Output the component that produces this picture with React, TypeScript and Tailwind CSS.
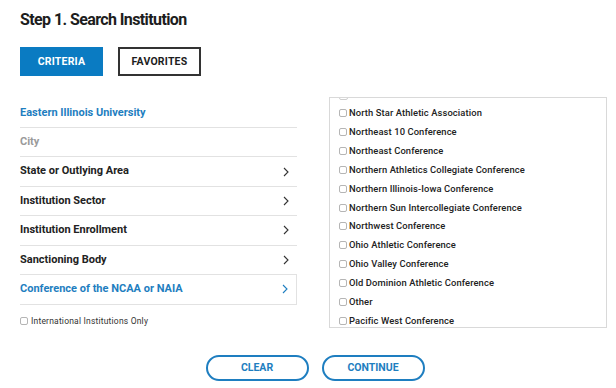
import React from "react";

const criteria = [
  { label: "Eastern Illinois University", tone: "blue", chevron: false },
  { label: "City", tone: "muted", chevron: false },
  { label: "State or Outlying Area", tone: "dark", chevron: true },
  { label: "Institution Sector", tone: "dark", chevron: true },
  { label: "Institution Enrollment", tone: "dark", chevron: true },
  { label: "Sanctioning Body", tone: "dark", chevron: true },
];

const conferences = [
  "North Star Athletic Association",
  "Northeast 10 Conference",
  "Northeast Conference",
  "Northern Athletics Collegiate Conference",
  "Northern Illinois-Iowa Conference",
  "Northern Sun Intercollegiate Conference",
  "Northwest Conference",
  "Ohio Athletic Conference",
  "Ohio Valley Conference",
  "Old Dominion Athletic Conference",
  "Other",
  "Pacific West Conference",
];

function Chevron({ color = "#333" }: { color?: string }) {
  return (
    <svg width="6" height="10" viewBox="0 0 6 10" className="mr-[8px]">
      <path d="M1 1l4 4-4 4" fill="none" stroke={color} strokeWidth="1.1" />
    </svg>
  );
}

function Box() {
  return <span className="inline-block w-[8px] h-[8px] border border-[#b5b5b5] rounded-[2px] bg-white shrink-0" />;
}

export default function App() {
  return (
    <div className="w-[616px] h-[388px] bg-white font-['Roboto',sans-serif] overflow-hidden">
      <div className="pl-5 pr-[9px] pt-[9px]">
        <h1 className="text-[16px] font-bold text-[#1d1d1d] leading-[22px] tracking-[-0.6px]">
          Step 1. Search Institution
        </h1>

        <div className="flex gap-[15px] mt-[16px]">
          <button className="w-[83px] h-[29px] bg-[#0a7bc2] text-white text-[10.5px] font-bold tracking-[0.2px]">
            CRITERIA
          </button>
          <button className="w-[83px] h-[29px] border-2 border-[#333] text-[#1d1d1d] text-[10.5px] font-bold tracking-[0.2px]">
            FAVORITES
          </button>
        </div>

        <div className="flex mt-[21px] gap-[32px]">
          <div className="w-[277px] shrink-0">
            {criteria.map((c, i) => (
              <div
                key={c.label}
                className={
                  "flex items-center justify-between border-b border-[#e2e2e2] " +
                  (i === 0 ? "h-[31px] pt-[2px]" : "h-[29.4px]")
                }
              >
                <span
                  className={
                    "text-[11px] font-bold " +
                    (c.tone === "blue"
                      ? "text-[#1e7ec0]"
                      : c.tone === "muted"
                      ? "text-[#9a9a9a]"
                      : "text-[#222]")
                  }
                >
                  {c.label}
                </span>
                {c.chevron && <Chevron />}
              </div>
            ))}
            <div className="h-[31px] flex items-center justify-between border border-[#e2e2e2] border-l-0 -mt-px">
              <span className="text-[11px] font-bold text-[#1e7ec0]">Conference of the NCAA or NAIA</span>
              <Chevron color="#1e7ec0" />
            </div>
            <label className="flex items-center gap-[3px] mt-[10px] text-[8.5px] text-[#333] tracking-[0.2px]">
              <Box />
              International Institutions Only
            </label>
          </div>

          <div className="w-[278px] h-[231px] shrink-0 border border-[#d9d9d9] overflow-hidden relative">
            <div className="absolute left-[9px] -top-[5px] w-[9px] h-[7px] border border-[#cfcfcf] rounded-[2px]" />
            <div className="pt-[6px] pl-[9px]">
              {conferences.map((name) => (
                <div key={name} className="h-[18.85px] flex items-center gap-[2px]">
                  <Box />
                  <span className="text-[9.4px] font-medium text-[#222] tracking-[0.1px]">{name}</span>
                </div>
              ))}
            </div>
          </div>
        </div>

        <div className="flex justify-center gap-[13px] mt-[27px] pl-[3px]">
          <button className="w-[103px] h-[26px] rounded-full border-2 border-[#1e7ec0] text-[#1e7ec0] text-[10.5px] font-bold">
            CLEAR
          </button>
          <button className="w-[103px] h-[26px] rounded-full border-2 border-[#1e7ec0] text-[#1e7ec0] text-[10.5px] font-bold">
            CONTINUE
          </button>
        </div>
      </div>
    </div>
  );
}
